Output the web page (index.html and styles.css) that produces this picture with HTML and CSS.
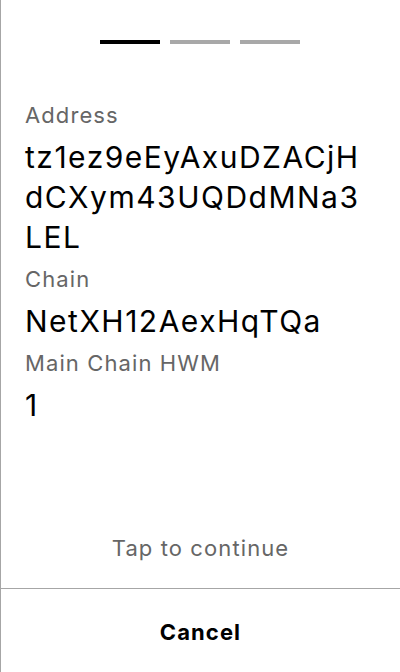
FILE: index.html
```html
<!DOCTYPE html>
<html lang="en">
<head>
<meta charset="utf-8">
<link rel="stylesheet" href="styles.css">
</head>
<body>
<div class="screen">
  <div class="progress">
    <span class="step step-active"></span>
    <span class="step"></span>
    <span class="step"></span>
  </div>
  <div class="fields">
    <div class="label">Address</div>
    <div class="value">tz1ez9eEyAxuDZACjHdCXym43UQDdMNa3LEL</div>
    <div class="label">Chain</div>
    <div class="value">NetXH12AexHqTQa</div>
    <div class="label">Main Chain HWM</div>
    <div class="value">1</div>
  </div>
  <div class="tap">Tap to continue</div>
  <div class="footer">
    <button class="cancel">Cancel</button>
  </div>
</div>
</body>
</html>
```

FILE: styles.css
```css
html, body {
  margin: 0;
  padding: 0;
  background: #fff;
}
body {
  font-family: Inter, "Noto Sans", sans-serif;
}
.screen {
  box-sizing: border-box;
  width: 400px;
  height: 672px;
  border-left: 1px solid #a6a6a6;
  display: flex;
  flex-direction: column;
}
.progress {
  display: flex;
  justify-content: center;
  gap: 10px;
  padding-top: 40px;
  padding-right: 1px;
}
.step {
  width: 60px;
  height: 4px;
  background: #a8a8a8;
}
.step-active {
  background: #000;
}
.fields {
  flex: 1;
  display: flex;
  flex-direction: column;
  gap: 7px;
  padding: 56px 26px 0 24px;
}
.label {
  font-size: 22px;
  line-height: 30px;
  letter-spacing: 0.05em;
  color: #666;
}
.value {
  font-size: 30px;
  line-height: 40px;
  letter-spacing: 0.05em;
  color: #000;
  word-break: break-all;
}
.tap {
  text-align: center;
  font-size: 22px;
  line-height: 30px;
  letter-spacing: 0.05em;
  color: #666;
  padding-bottom: 25px;
}
.footer {
  border-top: 1px solid #a6a6a6;
  height: 84px;
  box-sizing: border-box;
  padding-top: 3px;
  display: flex;
  align-items: center;
  justify-content: center;
}
.cancel {
  border: 0;
  background: none;
  font-family: Inter, "Noto Sans", sans-serif;
  font-size: 22px;
  letter-spacing: 0.05em;
  font-weight: 700;
  color: #000;
  padding: 0;
}
```
